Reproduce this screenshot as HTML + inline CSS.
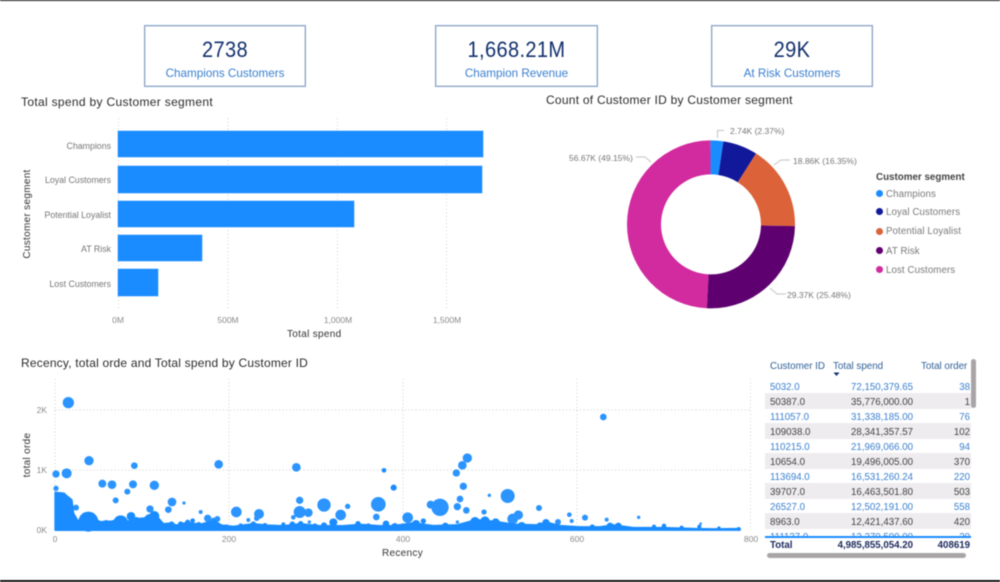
<!DOCTYPE html>
<html>
<head>
<meta charset="utf-8">
<style>
html,body{margin:0;padding:0;background:#fff;}
#p{position:relative;width:1000px;height:582px;overflow:hidden;background:#fff;font-family:"Liberation Sans",sans-serif;filter:blur(0.45px);}
.a{position:absolute;white-space:nowrap;}
.card{position:absolute;top:25px;height:60px;border:1px solid #8aa3c6;box-shadow:inset 0 0 0 .5px #b5c5dc;text-align:center;}
.card .v{position:absolute;left:0;right:0;top:9px;font-size:22px;line-height:30px;color:#12306e;letter-spacing:.4px;transform:scaleX(.91);}
.card .l{position:absolute;left:0;right:0;top:40px;font-size:11.7px;line-height:16px;color:#3a7fcf;}
.t{font-size:12px;line-height:14px;color:#2b2b2b;}
.cat{font-size:8.8px;line-height:12px;color:#777;text-align:right;width:100px;left:12px;}
.tick{font-size:8.5px;line-height:12px;color:#8a8a8a;text-align:center;width:60px;}
.ax{font-size:10px;line-height:12px;color:#333;letter-spacing:.3px;}
.bar{position:absolute;left:118px;background:#1a8cff;box-shadow:0 0 0 .5px #8cc4ff;}
.dl{font-size:8.5px;line-height:12px;color:#777;}
.lg{font-size:9.7px;line-height:12px;color:#7a7a7a;left:886px;letter-spacing:.1px;}
.dot{position:absolute;left:876px;width:7px;height:7px;border-radius:50%;}
.row{position:absolute;left:765px;width:206px;height:15px;font-size:9.7px;line-height:15px;}
.row span{position:absolute;top:0;white-space:nowrap;}
.c1{left:5px;}
.c2{right:58px;}
.c3{right:1px;}
.b{color:#3a7fcf;}
.g{color:#444;background:#eeecee;height:16px;}
</style>
</head>
<body>
<div id="p">
<div class="a" style="left:0;top:0;width:1000px;height:1px;background:#111"></div>
<div class="a" style="left:0;top:580px;width:1000px;height:2px;background:#111"></div>

<div class="card" style="left:144px;width:160px"><div class="v">2738</div><div class="l">Champions Customers</div></div>
<div class="card" style="left:435px;width:161px"><div class="v">1,668.21M</div><div class="l">Champion Revenue</div></div>
<div class="card" style="left:711px;width:160px"><div class="v">29K</div><div class="l">At Risk Customers</div></div>

<div class="a t" style="left:21px;top:95px;letter-spacing:.32px">Total spend by Customer segment</div>
<div class="a t" style="left:546px;top:93px;letter-spacing:.25px">Count of Customer ID by Customer segment</div>
<div class="a t" style="left:21px;top:356px;letter-spacing:.2px">Recency, total orde and Total spend by Customer ID</div>

<svg class="a" style="left:0;top:0" width="1000" height="582">
<g stroke="#cfcfcf" stroke-width="1" stroke-dasharray="1 2.500" fill="none">
<path d="M118.500 118V310M228 118V310M337.500 118V310M446.500 118V310"/>
<path d="M55 379V530M229 379V530M403 379V530M577 379V530M750.500 379V530"/>
<path d="M55 410H750M55 470H750"/>
</g>
</svg>

<div class="bar" style="top:131px;height:26px;width:365px"></div>
<div class="bar" style="top:166px;height:26.500px;width:364px"></div>
<div class="bar" style="top:200.500px;height:26px;width:236px"></div>
<div class="bar" style="top:235px;height:26px;width:84px"></div>
<div class="bar" style="top:269px;height:26.500px;width:40px"></div>

<div class="a cat" style="top:140px;left:11px">Champions</div>
<div class="a cat" style="top:174px;left:11px">Loyal Customers</div>
<div class="a cat" style="top:209px;left:11px">Potential Loyalist</div>
<div class="a cat" style="top:243px;left:11px">AT Risk</div>
<div class="a cat" style="top:278px;left:11px">Lost Customers</div>
<div class="a ax" style="left:28px;top:214px;transform:translate(-50%,-50%) rotate(-90deg)">Customer segment</div>
<div class="a tick" style="left:88px;top:314px">0M</div>
<div class="a tick" style="left:198px;top:314px">500M</div>
<div class="a tick" style="left:308px;top:314px">1,000M</div>
<div class="a tick" style="left:417px;top:314px">1,500M</div>
<div class="a ax" style="left:287px;top:329px">Total spend</div>

<!-- donut -->
<svg class="a" style="left:0;top:0" width="1000" height="582">
<g fill="none" stroke-width="34" transform="rotate(-90 711 224.400)">
<circle cx="711" cy="224.400" r="67" pathLength="100" stroke="#d22a9f" stroke-dasharray="49.15 50.85" stroke-dashoffset="-50.85"/>
<circle cx="711" cy="224.400" r="67" pathLength="100" stroke="#1a8cff" stroke-dasharray="2.37 97.63" stroke-dashoffset="0"/>
<circle cx="711" cy="224.400" r="67" pathLength="100" stroke="#12189a" stroke-dasharray="6.65 93.35" stroke-dashoffset="-2.37"/>
<circle cx="711" cy="224.400" r="67" pathLength="100" stroke="#dc6239" stroke-dasharray="16.35 83.65" stroke-dashoffset="-9.02"/>
<circle cx="711" cy="224.400" r="67" pathLength="100" stroke="#5f0070" stroke-dasharray="25.48 74.52" stroke-dashoffset="-25.37"/>
</g>
<g fill="none" stroke="#c4c4c4" stroke-width="1">
<path d="M717.500 138V130.500H724"/>
<path d="M774 165L781 160H790"/>
<path d="M770 288L777 294H786"/>
<path d="M651 162L645 157H636"/>
</g>
</svg>
<div class="a dl" style="left:730px;top:125px">2.74K (2.37%)</div>
<div class="a dl" style="left:793px;top:155px">18.86K (16.35%)</div>
<div class="a dl" style="left:787px;top:289px">29.37K (25.48%)</div>
<div class="a dl" style="left:569px;top:152px">56.67K (49.15%)</div>

<div class="a" style="left:876px;top:172px;font-size:9.800px;line-height:12px;font-weight:bold;color:#444">Customer segment</div>
<div class="dot" style="top:190px;background:#1a8cff"></div><div class="a lg" style="top:189px">Champions</div>
<div class="dot" style="top:208px;background:#12189a"></div><div class="a lg" style="top:207px">Loyal Customers</div>
<div class="dot" style="top:228px;background:#dc6239"></div><div class="a lg" style="top:226px">Potential Loyalist</div>
<div class="dot" style="top:247px;background:#5f0070"></div><div class="a lg" style="top:246px">AT Risk</div>
<div class="dot" style="top:266px;background:#d22a9f"></div><div class="a lg" style="top:265px">Lost Customers</div>

<!-- scatter -->
<svg class="a" style="left:0;top:350px" width="1000" height="232">
<g transform="scale(.33333)" fill="#1a8cff">
<path transform="translate(0 4)" stroke="#1a8cff" stroke-width="6" stroke-linejoin="round" d="M166 536V424L190 426L215 446L220 486L235 512L245 505L265 495L285 503L300 512L335 510L360 505L385 510L410 503L440 500L470 495L490 518L510 516L530 522L560 514L600 520L640 508L665 522L700 526L760 518L800 522L850 524L900 518L960 524L1030 524L1080 520L1140 524L1200 524V536Z"/>
<circle cx="265" cy="515" r="30"/><circle cx="238" cy="528" r="15"/><circle cx="295" cy="528" r="15"/><circle cx="362" cy="518" r="22"/><circle cx="393" cy="499" r="13"/><circle cx="450" cy="510" r="18"/><circle cx="463" cy="498" r="15"/><circle cx="205" cy="455" r="13"/><circle cx="182" cy="470" r="18"/><circle cx="215" cy="505" r="14"/><circle cx="190" cy="435" r="8"/>
<circle cx="318" cy="520" r="10"/><circle cx="410" cy="510" r="9"/><circle cx="515" cy="522" r="8"/><circle cx="542" cy="522" r="8"/><circle cx="563" cy="517" r="8"/><circle cx="578" cy="512" r="7"/><circle cx="596" cy="525" r="9"/><circle cx="680" cy="528" r="5"/><circle cx="722" cy="526" r="6"/><circle cx="760" cy="522" r="8"/><circle cx="795" cy="526" r="7"/><circle cx="850" cy="523" r="6"/><circle cx="877" cy="522" r="8"/><circle cx="902" cy="521" r="8"/><circle cx="945" cy="528" r="8"/><circle cx="972" cy="526" r="9"/><circle cx="1000" cy="517" r="12"/><circle cx="1074" cy="521" r="8"/><circle cx="1105" cy="527" r="7"/><circle cx="1158" cy="521" r="9"/><circle cx="1185" cy="527" r="8"/>
<g opacity=".92">
<circle cx="205" cy="158" r="17"/><circle cx="267" cy="332" r="14"/><circle cx="403" cy="347" r="10"/><circle cx="168" cy="372" r="11"/><circle cx="200" cy="370" r="15"/><circle cx="656" cy="343" r="13"/><circle cx="889" cy="352" r="13"/><circle cx="1152" cy="361" r="7"/><circle cx="1181" cy="413" r="9"/><circle cx="307" cy="401" r="12"/><circle cx="336" cy="404" r="13"/><circle cx="399" cy="403" r="12"/><circle cx="463" cy="406" r="14"/><circle cx="382" cy="425" r="9"/><circle cx="168" cy="415" r="8"/><circle cx="347" cy="451" r="9"/><circle cx="228" cy="473" r="9"/><circle cx="516" cy="456" r="13"/><circle cx="552" cy="459" r="5"/><circle cx="450" cy="477" r="11"/><circle cx="505" cy="479" r="10"/><circle cx="602" cy="486" r="6"/><circle cx="709" cy="486" r="16"/><circle cx="777" cy="492" r="15"/><circle cx="899" cy="451" r="11"/><circle cx="899" cy="486" r="18"/><circle cx="925" cy="488" r="13"/><circle cx="972" cy="465" r="20"/><circle cx="1043" cy="469" r="8"/><circle cx="1022" cy="495" r="16"/><circle cx="1135" cy="463" r="22"/><circle cx="1129" cy="501" r="10"/><circle cx="745" cy="510" r="6"/><circle cx="928" cy="516" r="5"/><circle cx="623" cy="505" r="11"/><circle cx="652" cy="507" r="9"/><circle cx="640" cy="510" r="7"/><circle cx="770" cy="505" r="8"/><circle cx="880" cy="502" r="7"/>
</g>
</g>
<g transform="translate(380 0) scale(.33333)" fill="#1a8cff">
<path transform="translate(0 3)" stroke="#1a8cff" stroke-width="5" stroke-linejoin="round" d="M-20 537V526L40 524L100 516L160 524L230 522L290 506L350 512L400 520L470 522L500 514L540 524L600 528L660 528L700 522L760 530L850 530L950 533L1000 534L1080 533V537Z"/>
<circle cx="18" cy="522" r="10"/><circle cx="42" cy="528" r="8"/><circle cx="108" cy="522" r="12"/><circle cx="130" cy="513" r="8"/><circle cx="196" cy="528" r="10"/><circle cx="285" cy="515" r="14"/><circle cx="315" cy="513" r="14"/><circle cx="347" cy="517" r="12"/><circle cx="425" cy="528" r="12"/><circle cx="498" cy="518" r="11"/><circle cx="480" cy="527" r="10"/><circle cx="690" cy="528" r="10"/><circle cx="715" cy="528" r="10"/><circle cx="637" cy="531" r="8"/><circle cx="852" cy="528" r="7"/><circle cx="905" cy="533" r="6"/><circle cx="1017" cy="534" r="5"/><circle cx="958" cy="530" r="6"/><circle cx="1076" cy="537" r="6"/><circle cx="822" cy="530" r="6"/>
<g opacity=".92">
<circle cx="670" cy="201" r="10"/><circle cx="262" cy="324" r="14"/><circle cx="247" cy="346" r="13"/><circle cx="229" cy="369" r="11"/><circle cx="12" cy="361" r="6"/><circle cx="41" cy="413" r="9"/><circle cx="250" cy="409" r="11"/><circle cx="328" cy="436" r="5"/><circle cx="383" cy="438" r="21"/><circle cx="240" cy="447" r="10"/><circle cx="180" cy="472" r="26"/><circle cx="152" cy="464" r="12"/><circle cx="232" cy="470" r="11"/><circle cx="259" cy="481" r="10"/><circle cx="477" cy="474" r="9"/><circle cx="83" cy="503" r="16"/><circle cx="312" cy="486" r="8"/><circle cx="415" cy="495" r="14"/><circle cx="398" cy="507" r="16"/><circle cx="568" cy="494" r="7"/><circle cx="615" cy="503" r="9"/><circle cx="575" cy="513" r="6"/><circle cx="680" cy="509" r="6"/><circle cx="776" cy="502" r="5"/><circle cx="534" cy="516" r="9"/><circle cx="232" cy="516" r="5"/><circle cx="962" cy="521" r="4"/>
</g>
</g>
</svg>

<div class="a tick" style="left:7px;top:404px;width:40px;text-align:right">2K</div>
<div class="a tick" style="left:7px;top:464px;width:40px;text-align:right">1K</div>
<div class="a tick" style="left:7px;top:524px;width:40px;text-align:right">0K</div>
<div class="a tick" style="left:25px;top:533px">0</div>
<div class="a tick" style="left:199px;top:533px">200</div>
<div class="a tick" style="left:373px;top:533px">400</div>
<div class="a tick" style="left:547px;top:533px">600</div>
<div class="a tick" style="left:721px;top:533px">800</div>
<div class="a ax" style="left:382px;top:548px">Recency</div>
<div class="a ax" style="left:28px;top:455px;transform:translate(-50%,-50%) rotate(-90deg)">total orde</div>

<!-- table -->
<div class="a" style="left:770px;top:360px;font-size:9.800px;line-height:13px;color:#2f5f96">Customer ID</div>
<div class="a" style="left:833px;top:360px;font-size:9.800px;line-height:13px;color:#2f5f96">Total spend</div>
<div class="a" style="left:921px;top:360px;font-size:9.800px;line-height:13px;color:#2f5f96">Total order</div>
<svg class="a" style="left:833px;top:372px" width="8" height="5"><path d="M0.500 0.500H6.500L3.500 4Z" fill="#12306e"/></svg>

<div style="position:absolute;left:0;top:0;width:1000px;height:536px;overflow:hidden">
<div class="row b" style="top:380px"><span class="c1">5032.0</span><span class="c2">72,150,379.65</span><span class="c3">38</span></div>
<div class="row g" style="top:393px;line-height:19px"><span class="c1">50387.0</span><span class="c2">35,776,000.00</span><span class="c3">1</span></div>
<div class="row b" style="top:410px"><span class="c1">111057.0</span><span class="c2">31,338,185.00</span><span class="c3">76</span></div>
<div class="row g" style="top:423px;line-height:19px"><span class="c1">109038.0</span><span class="c2">28,341,357.57</span><span class="c3">102</span></div>
<div class="row b" style="top:440px"><span class="c1">110215.0</span><span class="c2">21,969,066.00</span><span class="c3">94</span></div>
<div class="row g" style="top:453px;line-height:19px"><span class="c1">10654.0</span><span class="c2">19,496,005.00</span><span class="c3">370</span></div>
<div class="row b" style="top:470px"><span class="c1">113694.0</span><span class="c2">16,531,260.24</span><span class="c3">220</span></div>
<div class="row g" style="top:483px;line-height:19px"><span class="c1">39707.0</span><span class="c2">16,463,501.80</span><span class="c3">503</span></div>
<div class="row b" style="top:500px"><span class="c1">26527.0</span><span class="c2">12,502,191.00</span><span class="c3">558</span></div>
<div class="row g" style="top:513px;line-height:19px"><span class="c1">8963.0</span><span class="c2">12,421,437.60</span><span class="c3">420</span></div>
<div class="row b" style="top:530px"><span class="c1">111137.0</span><span class="c2">12,270,500.00</span><span class="c3">20</span></div>
</div>
<div class="a" style="left:765px;top:536px;width:206px;height:2px;background:#1a8cff"></div>
<div class="row" style="top:538px;font-weight:bold;color:#1c2a5c"><span class="c1">Total</span><span class="c2">4,985,855,054.20</span><span class="c3">408619</span></div>
<div class="a" style="left:767px;top:553px;width:199px;height:5px;border-radius:3px;background:#a9a5a7"></div>
<div class="a" style="left:971px;top:359px;width:5px;height:49px;border-radius:3px;background:#a9a5a7"></div>
</div>
</body>
</html>
